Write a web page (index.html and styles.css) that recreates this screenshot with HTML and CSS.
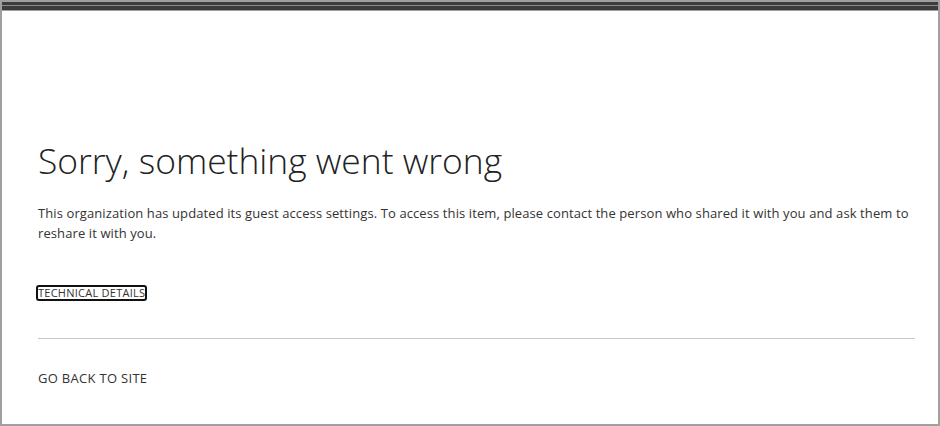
FILE: index.html
```html
<!DOCTYPE html>
<html lang="en">
<head>
<meta charset="UTF-8">
<meta name="viewport" content="width=device-width, initial-scale=1.0"/>
<title>Error</title>
<link rel="stylesheet" href="styles.css">
</head>
<body>
<div class="window">
  <div class="titlebar">
    <div class="bar"></div>
    <div class="bar-line"></div>
    <div class="bar thick"></div>
  </div>

  <div class="content">
    <h1>Sorry, something went wrong</h1>
    <p class="message">This organization has updated its guest access settings. To access this item, please contact the person who shared it with you and ask them to reshare it with you.</p>

    <div class="details">
      <a href="#" class="details-link">TECHNICAL DETAILS</a>
    </div>

    <hr class="divider">

    <a href="#" class="back-link">GO BACK TO SITE</a>
  </div>
</div>
</body>
</html>
```

FILE: styles.css
```css
html, body {
  margin: 0;
  padding: 0;
  background: #fff;
}
body {
  font-family: "Open Sans", "Noto Sans", sans-serif;
  color: #333;
}
.window {
  box-sizing: border-box;
  width: 940px;
  height: 426px;
  border: 2px solid #a0a0a0;
  background: #fff;
}
.titlebar {
  border-bottom: 1px solid #a0a0a0;
}
.titlebar .bar {
  height: 3px;
  background: #3c3c3c;
}
.titlebar .bar.thick {
  height: 4px;
}
.titlebar .bar-line {
  height: 1px;
  background: #8a8a8a;
}

.content {
  padding: 0 23px 0 36px;
}
h1 {
  font-weight: 300;
  font-size: 35.4px;
  line-height: 44px;
  color: #222;
  margin: 127px 0 0;
}
.message {
  font-size: 13px;
  letter-spacing: 0.1px;
  line-height: 20px;
  margin: 21px 0 0;
  color: #333;
}
.details {
  margin-top: 37px;
}
.details-link {
  display: inline-block;
  font-size: 11px;
  letter-spacing: 0.25px;
  line-height: 12px;
  color: #333;
  text-decoration: none;
  border: 2px solid #111;
  border-radius: 3px;
  margin-left: -2px;
}
.divider {
  border: 0;
  border-top: 1px solid #c8c8c8;
  margin: 36px 0 0;
}
.back-link {
  display: inline-block;
  margin-top: 30px;
  font-size: 13px;
  letter-spacing: 0.3px;
  color: #333;
  text-decoration: none;
}
```
